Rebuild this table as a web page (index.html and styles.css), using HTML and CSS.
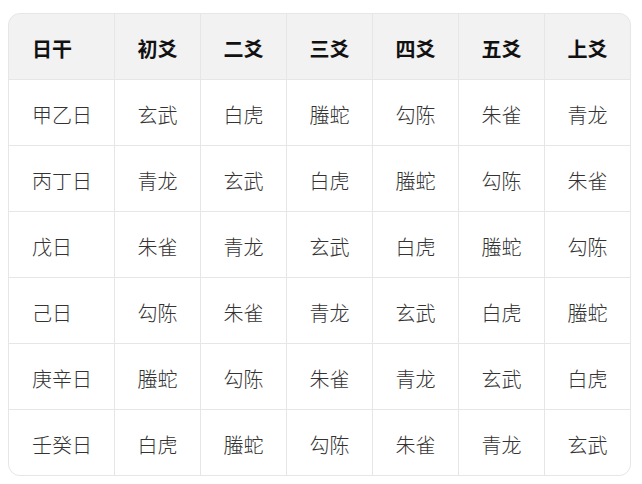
FILE: index.html
```html
<!DOCTYPE html>
<html lang="zh">
<head>
<meta charset="utf-8">
<link rel="stylesheet" href="styles.css">
</head>
<body>
<div class="wrap">
  <div class="grid">
    <div class="c h first">日干</div><div class="c h">初爻</div><div class="c h">二爻</div><div class="c h">三爻</div><div class="c h">四爻</div><div class="c h">五爻</div><div class="c h">上爻</div>
    <div class="c first">甲乙日</div><div class="c">玄武</div><div class="c">白虎</div><div class="c">螣蛇</div><div class="c">勾陈</div><div class="c">朱雀</div><div class="c">青龙</div>
    <div class="c first">丙丁日</div><div class="c">青龙</div><div class="c">玄武</div><div class="c">白虎</div><div class="c">螣蛇</div><div class="c">勾陈</div><div class="c">朱雀</div>
    <div class="c first">戊日</div><div class="c">朱雀</div><div class="c">青龙</div><div class="c">玄武</div><div class="c">白虎</div><div class="c">螣蛇</div><div class="c">勾陈</div>
    <div class="c first">己日</div><div class="c">勾陈</div><div class="c">朱雀</div><div class="c">青龙</div><div class="c">玄武</div><div class="c">白虎</div><div class="c">螣蛇</div>
    <div class="c first">庚辛日</div><div class="c">螣蛇</div><div class="c">勾陈</div><div class="c">朱雀</div><div class="c">青龙</div><div class="c">玄武</div><div class="c">白虎</div>
    <div class="c first">壬癸日</div><div class="c">白虎</div><div class="c">螣蛇</div><div class="c">勾陈</div><div class="c">朱雀</div><div class="c">青龙</div><div class="c">玄武</div>
  </div>
</div>
</body>
</html>
```
FILE: styles.css
```css
html, body {
  margin: 0;
  padding: 0;
  background: #ffffff;
}
.wrap {
  padding: 13px 0 0 8px;
}
.grid {
  display: grid;
  grid-template-columns: 105px repeat(6, 85px);
  grid-auto-rows: 65px;
  gap: 1px;
  width: 621px;
  border: 1px solid #e6e6e6;
  background: #e6e6e6;
  border-radius: 12px;
  overflow: hidden;
  font-family: "Noto Sans CJK SC", "Noto Sans", sans-serif;
}
.c {
  background: #ffffff;
  display: flex;
  align-items: center;
  justify-content: center;
  box-sizing: border-box;
  padding-top: 4px;
  font-size: 20px;
  font-weight: 300;
  color: #333333;
}
.c.first {
  justify-content: flex-start;
  padding-left: 23px;
}
.c.h {
  background: #f2f2f2;
  font-weight: 700;
  color: #111111;
}
```
